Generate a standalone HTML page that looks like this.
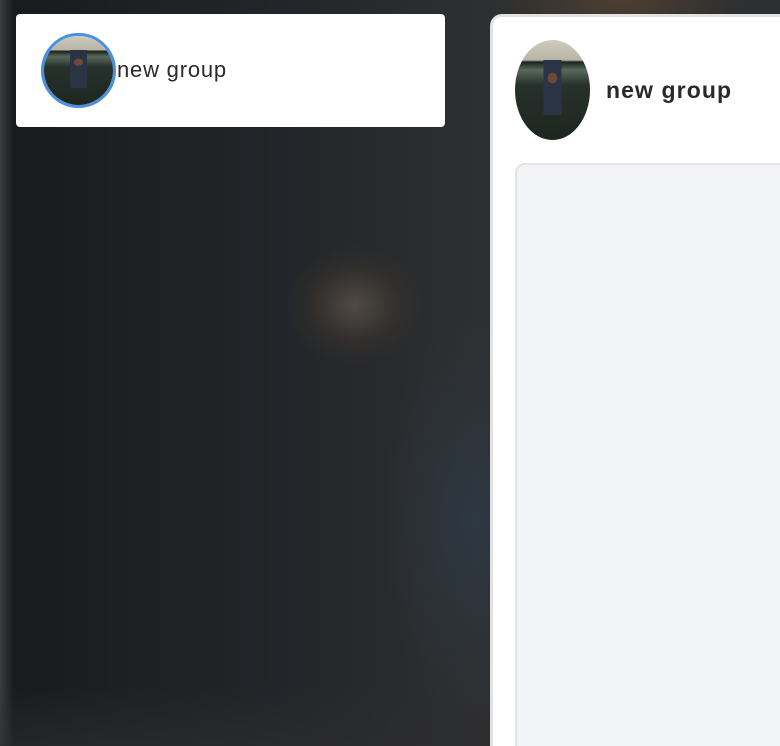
<!DOCTYPE html>
<html><head><meta charset="utf-8"><style>
html,body{margin:0;padding:0;width:780px;height:746px;overflow:hidden;font-family:"Liberation Sans",sans-serif}
body{position:relative;background:#1e2124}
.bg{position:absolute;inset:0;background:
radial-gradient(ellipse 70px 60px at 355px 305px,rgba(85,78,72,.9),rgba(60,52,45,.5) 60%,transparent 100%),
radial-gradient(ellipse 90px 200px at 470px 520px,rgba(45,58,70,.8),transparent 100%),
radial-gradient(ellipse 120px 60px at 620px 0px,rgba(90,70,50,.7),transparent 100%),
linear-gradient(90deg,#3a3d40 0px,#181b1e 14px,#1d2022 120px,#23262a 300px,#2e2f30 480px);}
.shade{position:absolute;left:0;right:0;bottom:0;height:60px;background:linear-gradient(180deg,transparent,rgba(45,45,48,.6))}
.card{position:absolute;left:16px;top:14px;width:429px;height:113px;background:#fff;border-radius:4px}
.av1{position:absolute;left:41px;top:33px;width:69px;height:69px;border:3px solid #4a90e2;border-radius:50%;overflow:hidden}
.photo{width:100%;height:100%;background:
radial-gradient(ellipse 10% 8% at 50% 38%,#6b4a3a 60%,transparent 70%),
linear-gradient(90deg,transparent 38%,#2b3445 38%,#2b3445 62%,transparent 62%) 0 45%/100% 55% no-repeat,
linear-gradient(180deg,#cfcbbd 0,#b9b6a6 20%,#1c2220 22%,#586a5a 30%,#27302b 45%,#1e2620 100%);}
.t1{position:absolute;left:117px;top:57px;font-size:22px;letter-spacing:0.8px;color:#2a2a2a;line-height:26px}
.panel{position:absolute;left:490px;top:14px;width:310px;height:760px;background:#fff;border:3px solid #e2e2e2;border-radius:12px;box-sizing:border-box}
.av2{position:absolute;left:515px;top:40px;width:75px;height:100px;border-radius:50%;overflow:hidden}
.t2{position:absolute;left:606px;top:76px;font-size:23px;letter-spacing:1.1px;font-weight:bold;color:#2a2a2a;line-height:28px}
.inner{position:absolute;left:515px;top:163px;width:300px;height:620px;background:#f2f3f5;border:2px solid #e4e4e6;border-radius:10px;box-sizing:border-box}
</style></head><body>
<div class="bg"></div><div class="shade"></div>
<div class="card"></div>
<div class="av1"><div class="photo"></div></div>
<div class="t1">new group</div>
<div class="panel"></div>
<div class="av2"><div class="photo"></div></div>
<div class="t2">new group</div>
<div class="inner"></div>
</body></html>
